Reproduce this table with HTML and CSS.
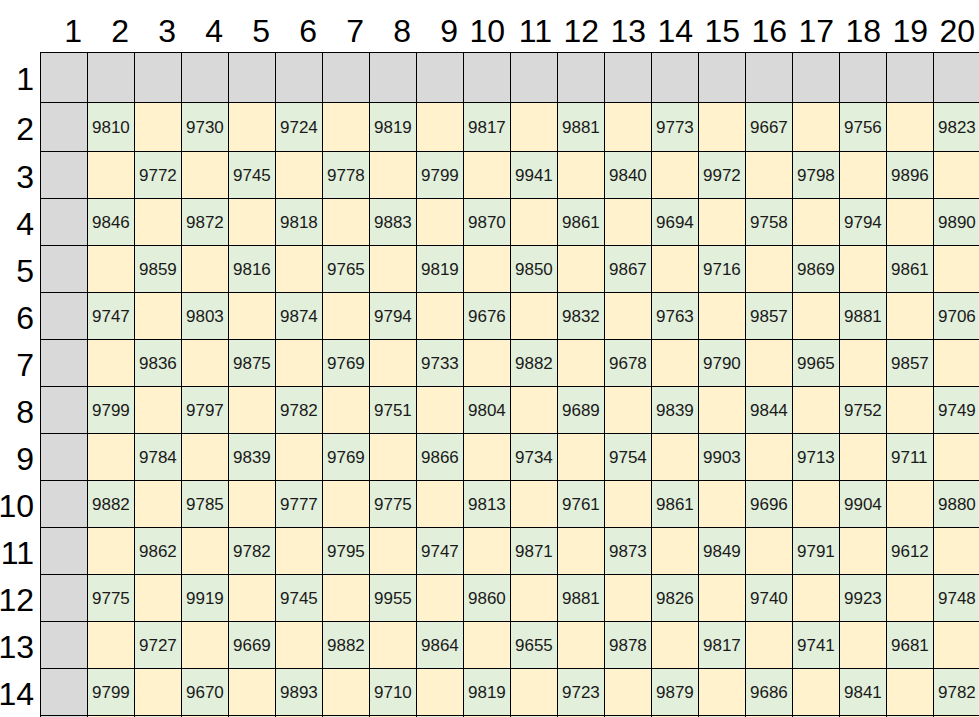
FILE: index.html
```html
<!DOCTYPE html>
<html lang="ko">
<head>
<meta charset="utf-8">
<title>Sheet</title>
<link rel="stylesheet" href="styles.css">
</head>
<body>
<div class="sheet">
  <div class="colheads">
    <div class="ch">1</div><div class="ch">2</div><div class="ch">3</div><div class="ch">4</div><div class="ch">5</div><div class="ch">6</div><div class="ch">7</div><div class="ch">8</div><div class="ch">9</div><div class="ch">10</div><div class="ch">11</div><div class="ch">12</div><div class="ch">13</div><div class="ch">14</div><div class="ch">15</div><div class="ch">16</div><div class="ch">17</div><div class="ch">18</div><div class="ch">19</div><div class="ch">20</div>
  </div>
  <div class="row first"><div class="rh">1</div>
    <div class="c g"></div><div class="c g"></div><div class="c g"></div><div class="c g"></div><div class="c g"></div><div class="c g"></div><div class="c g"></div><div class="c g"></div><div class="c g"></div><div class="c g"></div><div class="c g"></div><div class="c g"></div><div class="c g"></div><div class="c g"></div><div class="c g"></div><div class="c g"></div><div class="c g"></div><div class="c g"></div><div class="c g"></div><div class="c g"></div>
  </div>
  <div class="row second"><div class="rh">2</div>
    <div class="c g"></div><div class="c n">9810</div><div class="c y"></div><div class="c n">9730</div><div class="c y"></div><div class="c n">9724</div><div class="c y"></div><div class="c n">9819</div><div class="c y"></div><div class="c n">9817</div><div class="c y"></div><div class="c n">9881</div><div class="c y"></div><div class="c n">9773</div><div class="c y"></div><div class="c n">9667</div><div class="c y"></div><div class="c n">9756</div><div class="c y"></div><div class="c n">9823</div>
  </div>
  <div class="row"><div class="rh">3</div>
    <div class="c g"></div><div class="c y"></div><div class="c n">9772</div><div class="c y"></div><div class="c n">9745</div><div class="c y"></div><div class="c n">9778</div><div class="c y"></div><div class="c n">9799</div><div class="c y"></div><div class="c n">9941</div><div class="c y"></div><div class="c n">9840</div><div class="c y"></div><div class="c n">9972</div><div class="c y"></div><div class="c n">9798</div><div class="c y"></div><div class="c n">9896</div><div class="c y"></div>
  </div>
  <div class="row"><div class="rh">4</div>
    <div class="c g"></div><div class="c n">9846</div><div class="c y"></div><div class="c n">9872</div><div class="c y"></div><div class="c n">9818</div><div class="c y"></div><div class="c n">9883</div><div class="c y"></div><div class="c n">9870</div><div class="c y"></div><div class="c n">9861</div><div class="c y"></div><div class="c n">9694</div><div class="c y"></div><div class="c n">9758</div><div class="c y"></div><div class="c n">9794</div><div class="c y"></div><div class="c n">9890</div>
  </div>
  <div class="row"><div class="rh">5</div>
    <div class="c g"></div><div class="c y"></div><div class="c n">9859</div><div class="c y"></div><div class="c n">9816</div><div class="c y"></div><div class="c n">9765</div><div class="c y"></div><div class="c n">9819</div><div class="c y"></div><div class="c n">9850</div><div class="c y"></div><div class="c n">9867</div><div class="c y"></div><div class="c n">9716</div><div class="c y"></div><div class="c n">9869</div><div class="c y"></div><div class="c n">9861</div><div class="c y"></div>
  </div>
  <div class="row"><div class="rh">6</div>
    <div class="c g"></div><div class="c n">9747</div><div class="c y"></div><div class="c n">9803</div><div class="c y"></div><div class="c n">9874</div><div class="c y"></div><div class="c n">9794</div><div class="c y"></div><div class="c n">9676</div><div class="c y"></div><div class="c n">9832</div><div class="c y"></div><div class="c n">9763</div><div class="c y"></div><div class="c n">9857</div><div class="c y"></div><div class="c n">9881</div><div class="c y"></div><div class="c n">9706</div>
  </div>
  <div class="row"><div class="rh">7</div>
    <div class="c g"></div><div class="c y"></div><div class="c n">9836</div><div class="c y"></div><div class="c n">9875</div><div class="c y"></div><div class="c n">9769</div><div class="c y"></div><div class="c n">9733</div><div class="c y"></div><div class="c n">9882</div><div class="c y"></div><div class="c n">9678</div><div class="c y"></div><div class="c n">9790</div><div class="c y"></div><div class="c n">9965</div><div class="c y"></div><div class="c n">9857</div><div class="c y"></div>
  </div>
  <div class="row"><div class="rh">8</div>
    <div class="c g"></div><div class="c n">9799</div><div class="c y"></div><div class="c n">9797</div><div class="c y"></div><div class="c n">9782</div><div class="c y"></div><div class="c n">9751</div><div class="c y"></div><div class="c n">9804</div><div class="c y"></div><div class="c n">9689</div><div class="c y"></div><div class="c n">9839</div><div class="c y"></div><div class="c n">9844</div><div class="c y"></div><div class="c n">9752</div><div class="c y"></div><div class="c n">9749</div>
  </div>
  <div class="row"><div class="rh">9</div>
    <div class="c g"></div><div class="c y"></div><div class="c n">9784</div><div class="c y"></div><div class="c n">9839</div><div class="c y"></div><div class="c n">9769</div><div class="c y"></div><div class="c n">9866</div><div class="c y"></div><div class="c n">9734</div><div class="c y"></div><div class="c n">9754</div><div class="c y"></div><div class="c n">9903</div><div class="c y"></div><div class="c n">9713</div><div class="c y"></div><div class="c n">9711</div><div class="c y"></div>
  </div>
  <div class="row"><div class="rh">10</div>
    <div class="c g"></div><div class="c n">9882</div><div class="c y"></div><div class="c n">9785</div><div class="c y"></div><div class="c n">9777</div><div class="c y"></div><div class="c n">9775</div><div class="c y"></div><div class="c n">9813</div><div class="c y"></div><div class="c n">9761</div><div class="c y"></div><div class="c n">9861</div><div class="c y"></div><div class="c n">9696</div><div class="c y"></div><div class="c n">9904</div><div class="c y"></div><div class="c n">9880</div>
  </div>
  <div class="row"><div class="rh">11</div>
    <div class="c g"></div><div class="c y"></div><div class="c n">9862</div><div class="c y"></div><div class="c n">9782</div><div class="c y"></div><div class="c n">9795</div><div class="c y"></div><div class="c n">9747</div><div class="c y"></div><div class="c n">9871</div><div class="c y"></div><div class="c n">9873</div><div class="c y"></div><div class="c n">9849</div><div class="c y"></div><div class="c n">9791</div><div class="c y"></div><div class="c n">9612</div><div class="c y"></div>
  </div>
  <div class="row"><div class="rh">12</div>
    <div class="c g"></div><div class="c n">9775</div><div class="c y"></div><div class="c n">9919</div><div class="c y"></div><div class="c n">9745</div><div class="c y"></div><div class="c n">9955</div><div class="c y"></div><div class="c n">9860</div><div class="c y"></div><div class="c n">9881</div><div class="c y"></div><div class="c n">9826</div><div class="c y"></div><div class="c n">9740</div><div class="c y"></div><div class="c n">9923</div><div class="c y"></div><div class="c n">9748</div>
  </div>
  <div class="row"><div class="rh">13</div>
    <div class="c g"></div><div class="c y"></div><div class="c n">9727</div><div class="c y"></div><div class="c n">9669</div><div class="c y"></div><div class="c n">9882</div><div class="c y"></div><div class="c n">9864</div><div class="c y"></div><div class="c n">9655</div><div class="c y"></div><div class="c n">9878</div><div class="c y"></div><div class="c n">9817</div><div class="c y"></div><div class="c n">9741</div><div class="c y"></div><div class="c n">9681</div><div class="c y"></div>
  </div>
  <div class="row"><div class="rh">14</div>
    <div class="c g"></div><div class="c n">9799</div><div class="c y"></div><div class="c n">9670</div><div class="c y"></div><div class="c n">9893</div><div class="c y"></div><div class="c n">9710</div><div class="c y"></div><div class="c n">9819</div><div class="c y"></div><div class="c n">9723</div><div class="c y"></div><div class="c n">9879</div><div class="c y"></div><div class="c n">9686</div><div class="c y"></div><div class="c n">9841</div><div class="c y"></div><div class="c n">9782</div>
  </div>
  <div class="row"><div class="rh"></div>
    <div class="c g"></div><div class="c y"></div><div class="c n"></div><div class="c y"></div><div class="c n"></div><div class="c y"></div><div class="c n"></div><div class="c y"></div><div class="c n"></div><div class="c y"></div><div class="c n"></div><div class="c y"></div><div class="c n"></div><div class="c y"></div><div class="c n"></div><div class="c y"></div><div class="c n"></div><div class="c y"></div><div class="c n"></div><div class="c y"></div>
  </div>
</div>
</body>
</html>
```
FILE: styles.css
```css
html, body {
  margin: 0;
  padding: 0;
  background: #ffffff;
  overflow: hidden;
}

.sheet {
  width: 981px;
  font-family: "Liberation Sans", Arial, sans-serif;
  color: #000;
}

.colheads {
  display: flex;
  align-items: flex-end;
  height: 52px;
  padding-left: 41px;
  box-sizing: border-box;
  padding-bottom: 3px;
}

.ch {
  flex: 0 0 47px;
  min-width: 0;
  text-align: right;
  padding-right: 6px;
  box-sizing: border-box;
  font-size: 32px;
  line-height: 36px;
  white-space: nowrap;
}

.row {
  display: flex;
  height: 47px;
}

.row.first {
  height: 51px;
}

.row.second {
  height: 49px;
}

.rh {
  flex: 0 0 41px;
  min-width: 0;
  box-sizing: border-box;
  border-right: 1px solid #000;
  display: flex;
  align-items: center;
  justify-content: flex-end;
  padding-right: 6px;
  padding-top: 3px;
  font-size: 32px;
  line-height: 36px;
  white-space: nowrap;
}

.c {
  flex: 0 0 47px;
  min-width: 0;
  box-sizing: border-box;
  border-right: 1px solid #000;
  border-bottom: 1px solid #000;
  display: flex;
  align-items: center;
  padding-left: 4px;
  padding-top: 1px;
  font-size: 17px;
  color: #1a1a1a;
  white-space: nowrap;
  overflow: hidden;
}

.row.first .c {
  border-top: 1px solid #000;
}

.g {
  background: #d9d9d9;
}

.n {
  background: #e2efda;
}

.y {
  background: #fff2cc;
}
```
